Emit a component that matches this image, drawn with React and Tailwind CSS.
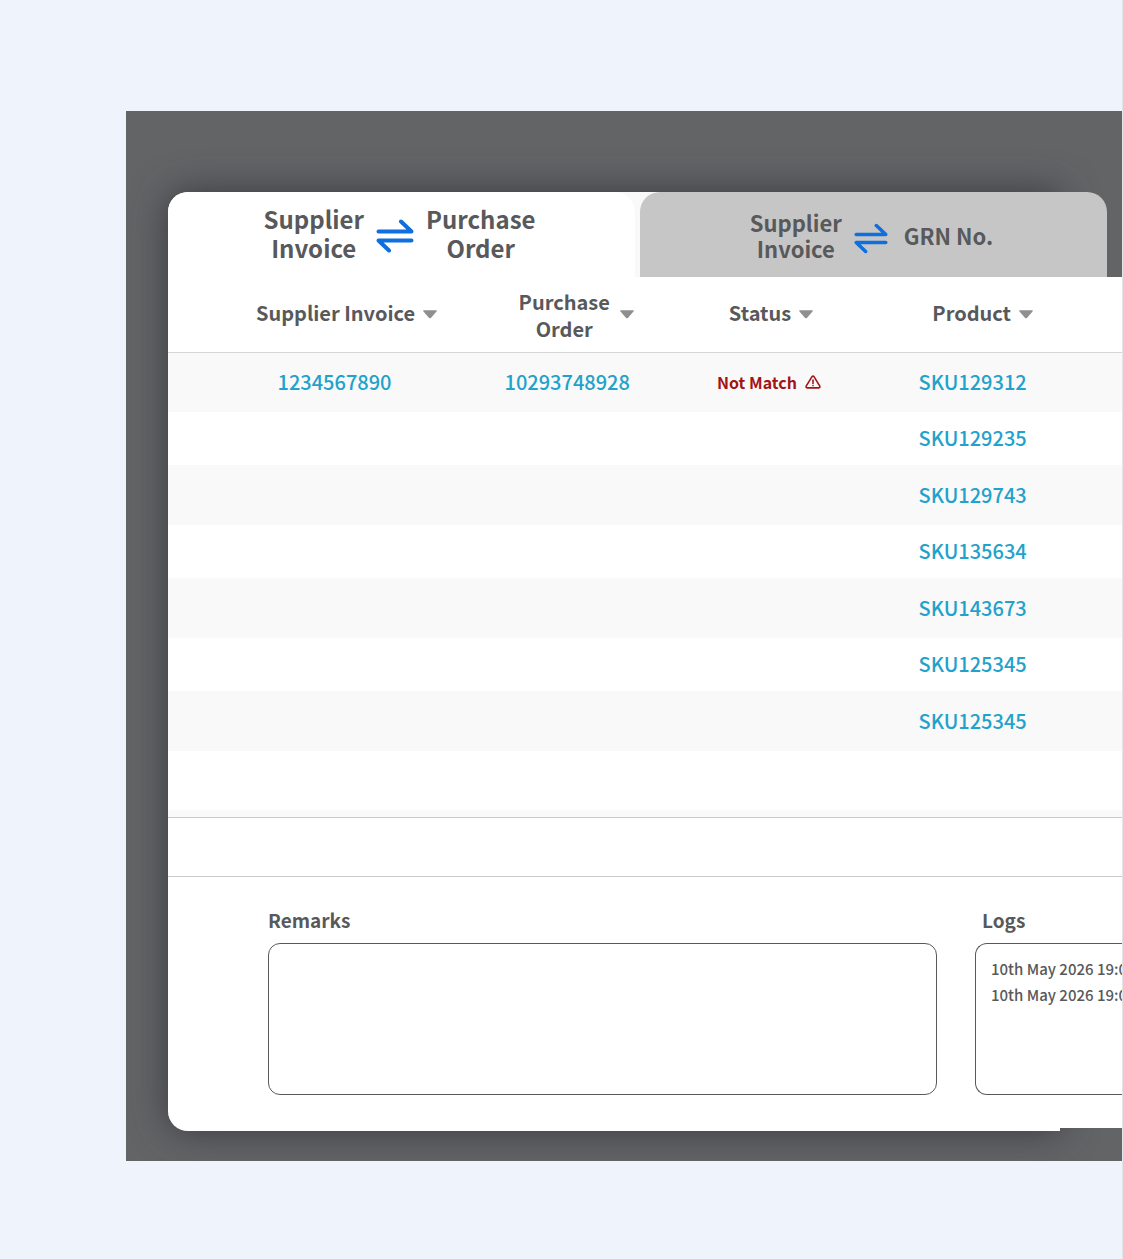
import { useState } from 'react';

const ROWS = [
  { invoice: '1234567890', order: '10293748928', status: 'Not Match', product: 'SKU129312' },
  { product: 'SKU129235' },
  { product: 'SKU129743' },
  { product: 'SKU135634' },
  { product: 'SKU143673' },
  { product: 'SKU125345' },
  { product: 'SKU125345' },
];

const COLUMNS = [
  { key: 'invoice', label: 'Supplier Invoice', cell: 'pl-[68px]', labelClass: 'pb-1 whitespace-nowrap' },
  { key: 'order', label: 'Purchase Order', cell: 'pl-4', labelClass: 'w-24 pt-0.5' },
  { key: 'status', label: 'Status', cell: 'pl-1', labelClass: 'pb-1' },
  { key: 'product', label: 'Product', cell: 'pl-5', labelClass: 'pb-1' },
];

const LOGS = ['10th May 2026 19:00', '10th May 2026 19:00'];

const linkClass = 'text-xl leading-6 font-medium text-[#1fa2cb]';

function SwapIcon({ className }) {
  return (
    <svg
      viewBox="0 0 38 34"
      className={className}
      fill="none"
      stroke="#0f6fde"
      strokeWidth="4"
      strokeLinecap="round"
      strokeLinejoin="round"
      aria-hidden="true"
    >
      <path d="M2.5 12.5H35.5L25 2.5" />
      <path d="M35.5 21.5H2.5L13 31.5" />
    </svg>
  );
}

function CaretIcon() {
  return (
    <svg viewBox="0 0 14 9" className="h-[9px] w-[14px] shrink-0" fill="#8f8f8f" aria-hidden="true">
      <path d="M0.6 0.3H13.4Q14.2 0.7 13.5 1.5L7.9 7.9Q7 8.8 6.1 7.9L0.5 1.5Q-0.2 0.7 0.6 0.3Z" />
    </svg>
  );
}

function WarningIcon() {
  return (
    <svg
      viewBox="0 0 16 14"
      className="h-[14px] w-4 shrink-0"
      fill="none"
      stroke="#a31515"
      strokeWidth="1.6"
      strokeLinecap="round"
      strokeLinejoin="round"
      aria-hidden="true"
    >
      <path d="M7 1.7 1.2 11.2Q0.7 12.8 2.2 12.9H13.8Q15.3 12.8 14.8 11.2L9 1.7Q8 0.5 7 1.7Z" />
      <path d="M8 5V8.5M8 10.5V10.6" />
    </svg>
  );
}

export default function App() {
  const [tab, setTab] = useState('order');
  const [remarks, setRemarks] = useState('');

  return (
    <main className="min-h-screen overflow-hidden border-r border-[#e2e4e8] bg-[#eef3fc] pt-[111px] pb-[98px] pl-[126px] font-['Noto_Sans_CJK_SC',sans-serif] text-[#58595b]">
      <section className="overflow-hidden bg-[#636466] pt-[81px] pb-[30px] pl-[42px]">
        <div className="relative">
          {/* Backing sheet that carries the shadow */}
          <div className="absolute inset-y-0 right-[62px] left-0 rounded-l-[20px] border-b-4 border-white bg-[#f9f9f9] shadow-[0_0_36px_rgba(50,50,56,0.85)]" />

          <div className="relative pb-[3px]">
            <div role="tablist" className="flex h-[85px] gap-[5px] pr-[15px]">
              <button
                type="button"
                role="tab"
                aria-selected={tab === 'order'}
                onClick={() => setTab('order')}
                className="flex flex-1 items-center justify-center gap-3 rounded-t-[20px] bg-white pt-0.5 pr-1 text-2xl leading-[29px] font-bold"
              >
                <span className="w-min pb-1.5">Supplier Invoice</span>
                <SwapIcon className="h-[34px] w-[38px]" />
                <span className="w-min pb-1.5">Purchase Order</span>
              </button>
              <button
                type="button"
                role="tab"
                aria-selected={tab === 'grn'}
                onClick={() => setTab('grn')}
                className="flex flex-1 items-center justify-center gap-3 rounded-t-[20px] bg-[#c6c6c6] pt-2 pr-1 text-[22px] leading-[26px] font-bold"
              >
                <span className="w-min pb-2">Supplier Invoice</span>
                <SwapIcon className="h-[31px] w-[34px]" />
                <span className="pb-2 pl-1 whitespace-nowrap">GRN No.</span>
              </button>
            </div>

            <div className="border-b border-[#c9cbcb] bg-[#f9f9f9] pb-[7px]">
              <table className="w-full table-fixed border-collapse bg-white text-center">
                <colgroup>
                  <col className="w-[30.3%]" />
                  <col className="w-[23.1%]" />
                  <col className="w-[19.2%]" />
                  <col className="w-[23.5%]" />
                  <col />
                </colgroup>
                <thead>
                  <tr className="h-[75px] border-b border-[#d4d6d6]">
                    {COLUMNS.map((col) => (
                      <th key={col.key} className={`p-0 align-middle ${col.cell}`}>
                        <button
                          type="button"
                          className="inline-flex items-center gap-2 align-middle text-xl leading-[27px] font-bold"
                        >
                          <span className={col.labelClass}>{col.label}</span>
                          <CaretIcon />
                        </button>
                      </th>
                    ))}
                    <th className="p-0" />
                  </tr>
                </thead>
                <tbody>
                  {ROWS.map((row, i) => (
                    <tr key={i} className="h-[53px] odd:h-[60px] odd:bg-[#f9f9f9]">
                      <td className="p-0 pl-11">
                        {row.invoice ? <a href="#invoice" className={linkClass}>{row.invoice}</a> : null}
                      </td>
                      <td className="p-0">
                        {row.order ? <a href="#order" className={linkClass}>{row.order}</a> : null}
                      </td>
                      <td className="p-0">
                        {row.status ? (
                          <span className="flex items-center justify-center gap-2 text-base leading-6 font-bold text-[#a31515]">
                            {row.status}
                            <WarningIcon />
                          </span>
                        ) : null}
                      </td>
                      <td className="p-0">
                        <a href="#product" className={linkClass}>{row.product}</a>
                      </td>
                      <td className="p-0" />
                    </tr>
                  ))}
                  <tr className="h-[59px]">
                    <td colSpan={5} className="p-0" />
                  </tr>
                </tbody>
              </table>
            </div>

            <div className="h-[59px] border-b border-[#c9cbcb] bg-white" />

            <div className="flex gap-[38px] rounded-bl-[20px] bg-white pt-[26px] pb-[33px] pl-[100px]">
              <div className="w-[669px] shrink-0">
                <label htmlFor="remarks" className="block text-[19px] leading-[34px] font-bold">
                  Remarks
                </label>
                <textarea
                  id="remarks"
                  value={remarks}
                  onChange={(e) => setRemarks(e.target.value)}
                  className="mt-1.5 block h-[152px] w-full resize-none rounded-[12px] border border-[#58595b] p-3 text-sm outline-none"
                />
              </div>
              <div className="min-w-0 flex-1">
                <h2 className="pl-[7px] text-[19px] leading-[34px] font-bold">Logs</h2>
                <ul className="mt-1.5 h-[152px] overflow-hidden rounded-l-[12px] border border-r-0 border-[#58595b] pt-3 pl-[15px] text-[15px] leading-[26px] font-medium whitespace-nowrap">
                  {LOGS.map((entry, i) => (
                    <li key={i}>{entry}</li>
                  ))}
                </ul>
              </div>
            </div>
          </div>
        </div>
      </section>
    </main>
  );
}
